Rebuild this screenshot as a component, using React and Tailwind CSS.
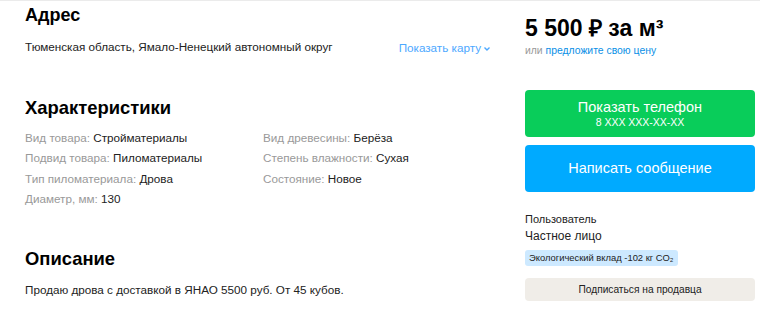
import React from 'react';

const font = { fontFamily: '"Liberation Sans", Arial, sans-serif' };

function Row({ label, value }) {
  return (
    <div className="h-[20.3px] leading-[20px]">
      <span className="text-[#999]">{label}: </span>
      <span className="text-[#222]">{value}</span>
    </div>
  );
}

export default function App() {
  return (
    <div style={font} className="w-[760px] h-[328px] bg-white border-t border-[#ebebeb] overflow-hidden flex pl-[25px]">
      <div className="w-[466px] shrink-0">
        <h2 className="text-[18px] font-bold leading-[24px] mt-[2px] text-black">Адрес</h2>
        <div className="flex justify-between items-center mt-[11px] text-[11.7px] leading-[16px]">
          <span className="text-[#222]">Тюменская область, Ямало-Ненецкий автономный округ</span>
          <span className="text-[#4da8ff] flex items-center gap-[2px] pt-[2px]">
            Показать карту
            <svg width="8" height="6" viewBox="0 0 8 6" className="mt-[1px]">
              <path d="M1.5 1.5 L4 4 L6.5 1.5" fill="none" stroke="#4da8ff" strokeWidth="1.4" />
            </svg>
          </span>
        </div>

        <h2 className="text-[18.4px] font-bold leading-[24px] mt-[40px] text-black">Характеристики</h2>
        <div className="flex mt-[8px] text-[11.7px]">
          <div className="w-[238px]">
            <Row label="Вид товара" value="Стройматериалы" />
            <Row label="Подвид товара" value="Пиломатериалы" />
            <Row label="Тип пиломатериала" value="Дрова" />
            <Row label="Диаметр, мм" value="130" />
          </div>
          <div>
            <Row label="Вид древесины" value="Берёза" />
            <Row label="Степень влажности" value="Сухая" />
            <Row label="Состояние" value="Новое" />
          </div>
        </div>

        <h2 className="text-[18.4px] font-bold leading-[24px] mt-[38px] text-black">Описание</h2>
        <p className="mt-[11px] text-[11.7px] leading-[16px] text-[#222]">
          Продаю дрова с доставкой в ЯНАО 5500 руб. От 45 кубов.
        </p>
      </div>

      <div className="w-[230px] ml-[34px] shrink-0">
        <div className="mt-[14px] text-[23px] font-bold leading-[26px] text-black">
          5 500 ₽ за м³
        </div>
        <div className="text-[10.4px] leading-[14px] mt-[3px]">
          <span className="text-[#999]">или </span>
          <span className="text-[#0a8fe6]">предложите свою цену</span>
        </div>

        <button className="mt-[32px] w-full h-[47px] rounded-[4px] bg-[#09cd5a] text-white flex flex-col items-center justify-center">
          <span className="text-[14.5px] leading-[17px]">Показать телефон</span>
          <span className="text-[10.5px] leading-[13px]">8 XXX XXX-XX-XX</span>
        </button>
        <button className="mt-[8px] w-full h-[47px] rounded-[4px] bg-[#00aaff] text-white text-[14.5px]">
          Написать сообщение
        </button>

        <div className="mt-[19px] text-[11px] leading-[16px] text-[#222]">Пользователь</div>
        <div className="mt-[1px] text-[12px] leading-[16px] text-[#222]">Частное лицо</div>
        <div className="mt-[2px] inline-block rounded-[3px] bg-[#cde9ff] px-[4px] text-[9.4px] leading-[16px] text-[#222]">
          Экологический вклад -102 кг CO₂
        </div>
        <button className="mt-[10px] w-full h-[23px] rounded-[4px] bg-[#f0ede8] text-[10.2px] text-[#222]">
          Подписаться на продавца
        </button>
      </div>
    </div>
  );
}
